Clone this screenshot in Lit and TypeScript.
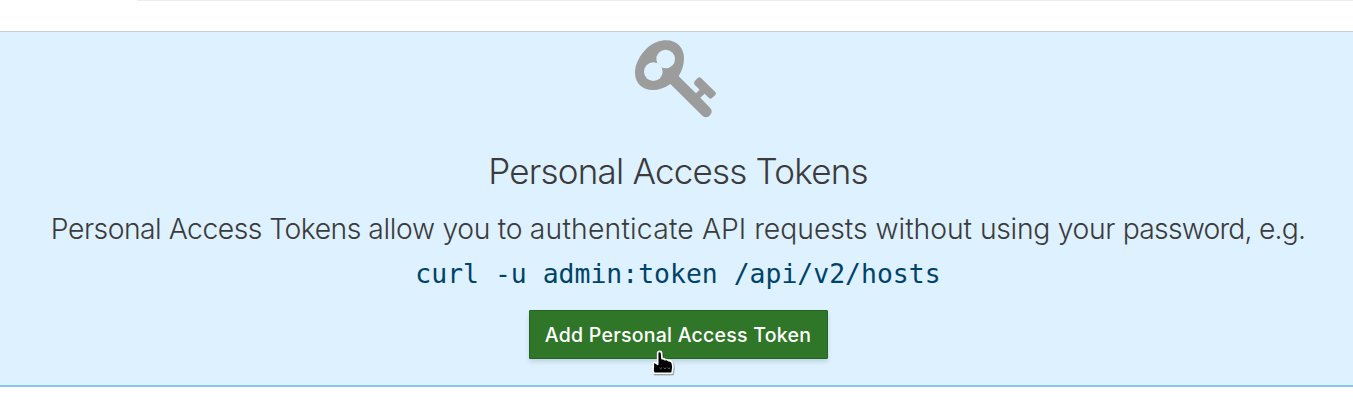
import { LitElement, html, css } from "lit";
import { customElement } from "lit/decorators.js";

@customElement("app-root")
export class AppRoot extends LitElement {
  static styles = css`
    :host { display: block; height: 417px; background: #fff; overflow: hidden; font-family: Inter, "Open Sans", sans-serif; color: #3b3b3b; }
    .top { height: 31px; box-sizing: border-box; padding-left: 137px; }
    .rule { height: 1px; background: #ededed; }
    .panel { box-sizing: border-box; height: 356px; background: #def1ff; border-top: 1px solid #c9d0d4; border-bottom: 2px solid #86c8ec; display: flex; flex-direction: column; align-items: center; padding-left: 3px; white-space: nowrap; }
    .key { display: block; width: 130px; height: 105px; margin-top: -7px; margin-right: 6px; flex: none; }
    h1 { margin: 16px 0 0; font-size: 35px; line-height: 50px; font-weight: 330; letter-spacing: -0.8px; }
    p { margin: 10px 0 0; font-size: 28.3px; line-height: 46px; font-weight: 330; letter-spacing: -0.31px; }
    .tight { letter-spacing: -0.5px; }
    .wide { letter-spacing: 0.2px; }
    .even { letter-spacing: -0.02px; }
    .close { letter-spacing: -0.8px; }
    code { font-family: "DejaVu Sans Mono", monospace; font-size: 26.45px; line-height: 44px; color: #004368; }
    button { position: relative; margin: 14px 0 0; box-sizing: border-box; width: 299px; height: 49px; padding: 0; border: 1px solid #23651d; background: #307628; color: #fff; font: 550 19.5px/49px Inter, sans-serif; letter-spacing: 0.25px; border-radius: 1px; box-shadow: 0 3px 4px rgba(40, 70, 90, 0.16); }
    .cursor { position: absolute; left: 115px; top: 36px; width: 30px; height: 30px; overflow: visible; }
  `;

  render() {
    return html`
      <div class="top"><div class="rule"></div></div>
      <main class="panel">
        <svg class="key" viewBox="0 0 390 315" aria-hidden="true">
          <path fill="#9c9c9c" d="M75 143C75 119 88 92 109 71C129 53 149 46 169 46C202 46 222 70 222 100C222 119 216 138 206 154L258 205L269 194L254 179Q250 174 254 169L263 159Q268 154 273 159L316 201Q320 205 316 210L306 219Q301 223 297 219L284 206L271 218L300 248Q309 258 302 268L298 273Q288 281 278 273L181 177C164 189 146 195 128 195C97 195 75 174 75 143Z"/>
          <circle fill="#def1ff" cx="167" cy="102" r="28"/>
          <circle fill="#def1ff" cx="130" cy="140" r="28"/>
        </svg>
        <h1>Personal Access Tokens</h1>
        <p><span class="tight">Personal Access Tokens </span>allow you to <span class="wide">authenticate </span><span class="even">API requests without </span>using your <span class="close">password, e.g.</span></p>
        <code>curl -u admin:token /api/v2/hosts</code>
        <button>Add Personal Access Token
          <svg class="cursor" viewBox="0 0 90 90" aria-hidden="true">
            <path d="M38 17Q39 13 44 13Q50 13 50 20L51 35Q57 34 60 38Q67 36 70 41Q79 40 82 48L84 60L81 79L27 79L24 72L25 50Q25 45 31 47L38 52Z" fill="#000" stroke="#fff" stroke-width="5" stroke-linejoin="round" style="filter:drop-shadow(2px 3px 2px #0007)"/>
            <path d="M43 62q4 7 8 0m5 0q4 7 8 0m4 0q4 7 8 0" fill="none" stroke="#999" stroke-width="2"/>
          </svg>
        </button>
      </main>
    `;
  }
}
